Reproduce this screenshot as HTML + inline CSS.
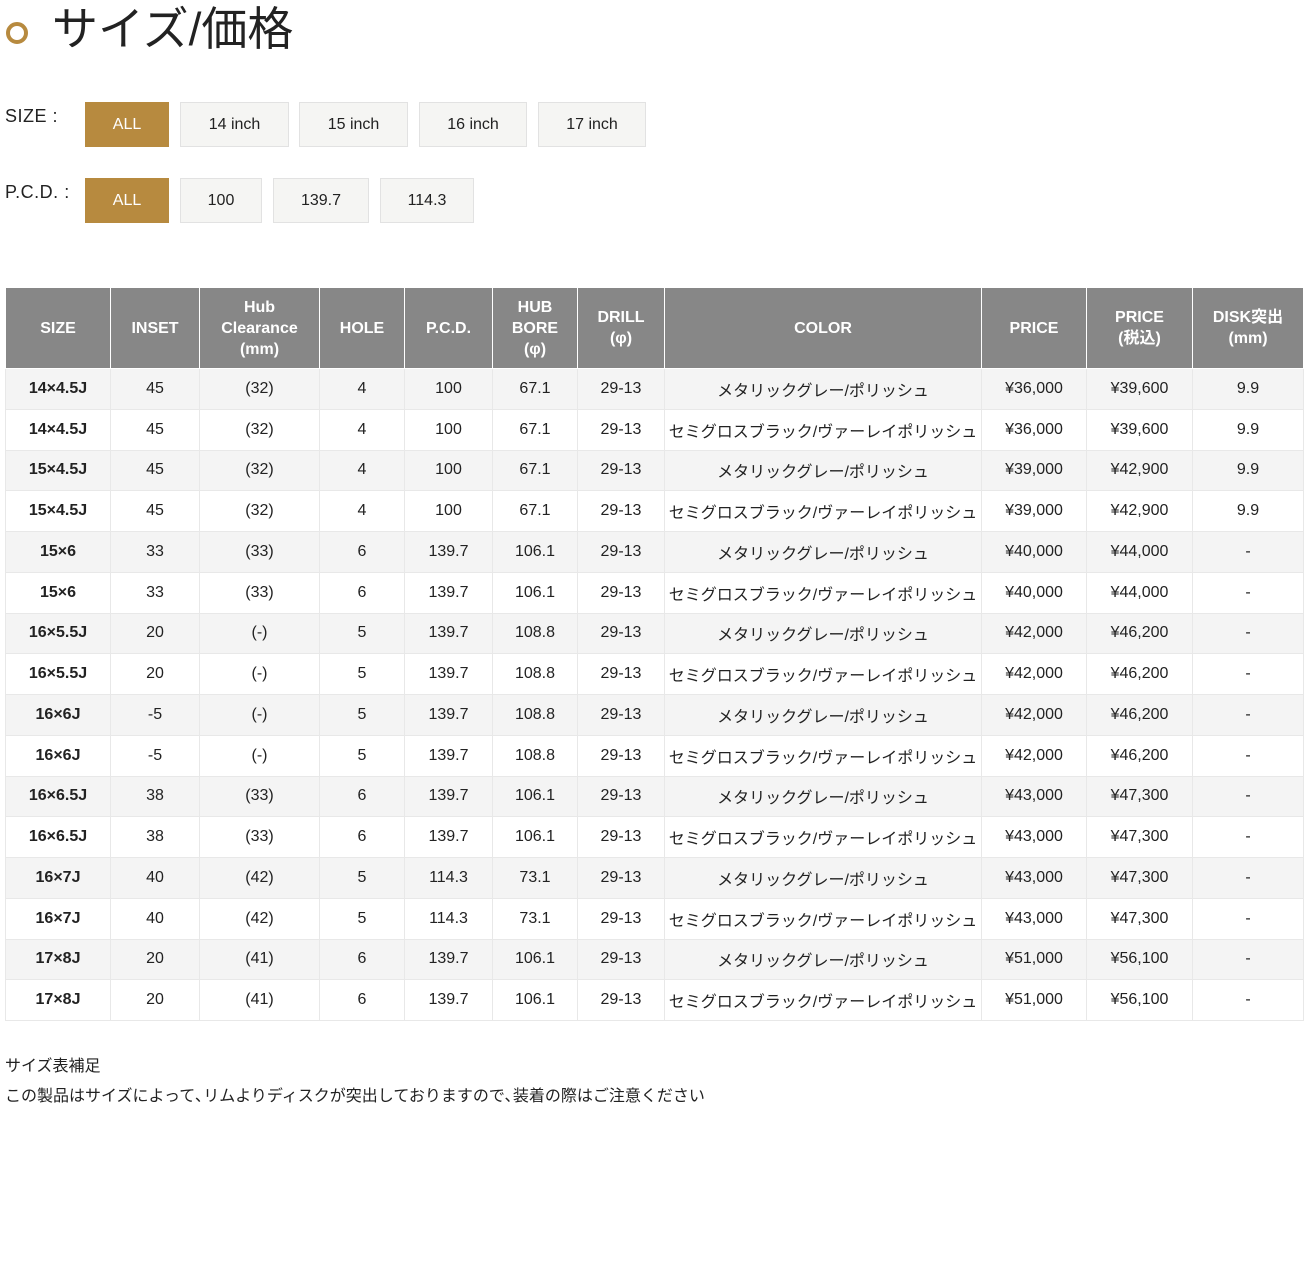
<!DOCTYPE html>
<html><head><meta charset="utf-8"><style>
*{margin:0;padding:0;box-sizing:border-box}
body{width:1311px;height:1283px;background:#fff;font-family:"Liberation Sans","Noto Sans CJK JP",sans-serif;color:#222;position:relative}
.circ{position:absolute;left:6px;top:22px;width:22px;height:22px;border:4px solid #b78a3f;border-radius:50%}
h1{position:absolute;left:52px;top:0;font-size:46px;font-weight:400;line-height:58px;color:#222}
.lbl{position:absolute;left:5px;font-size:18px;letter-spacing:0.5px}
.btn{position:absolute;height:45px;background:#f5f5f3;border:1px solid #e2e2e2;font-size:16px;display:flex;align-items:center;justify-content:center;color:#222}
.btn.on{background:#b78a3f;border-color:#b78a3f;color:#fff}
table{position:absolute;left:5px;top:287px;width:1298px;border-collapse:collapse;table-layout:fixed}
th{background:#878787;color:#fff;font-weight:bold;font-size:16px;height:81px;border:1px solid #fff;line-height:21px;text-align:center}
td{height:40.75px;text-align:center;font-size:16px;border:1px solid #e8e8e8;color:#222}
td:first-child{font-weight:bold}
tr:nth-child(even) td{background:#f4f4f4}
.note{position:absolute;left:5px;font-size:16px}
</style></head><body>
<div class="circ"></div>
<h1>サイズ/価格</h1>
<div class="lbl" style="top:106px">SIZE :</div>
<div class="btn on" style="left:85px;top:102px;width:84px">ALL</div>
<div class="btn" style="left:180px;top:102px;width:109px">14 inch</div>
<div class="btn" style="left:299px;top:102px;width:109px">15 inch</div>
<div class="btn" style="left:419px;top:102px;width:108px">16 inch</div>
<div class="btn" style="left:538px;top:102px;width:108px">17 inch</div>
<div class="lbl" style="top:182px">P.C.D. :</div>
<div class="btn on" style="left:85px;top:178px;width:84px">ALL</div>
<div class="btn" style="left:180px;top:178px;width:82px">100</div>
<div class="btn" style="left:273px;top:178px;width:96px">139.7</div>
<div class="btn" style="left:380px;top:178px;width:94px">114.3</div>
<table>
<colgroup><col style="width:105px"><col style="width:89px"><col style="width:120px"><col style="width:85px"><col style="width:88px"><col style="width:85px"><col style="width:87px"><col style="width:317px"><col style="width:105px"><col style="width:106px"><col style="width:111px"></colgroup>
<tr><th>SIZE</th><th>INSET</th><th>Hub<br>Clearance<br>(mm)</th><th>HOLE</th><th>P.C.D.</th><th>HUB<br>BORE<br>(φ)</th><th>DRILL<br>(φ)</th><th>COLOR</th><th>PRICE</th><th>PRICE<br>(税込)</th><th>DISK突出<br>(mm)</th></tr>
<tr><td>14×4.5J</td><td>45</td><td>(32)</td><td>4</td><td>100</td><td>67.1</td><td>29-13</td><td>メタリックグレー/ポリッシュ</td><td>¥36,000</td><td>¥39,600</td><td>9.9</td></tr>
<tr><td>14×4.5J</td><td>45</td><td>(32)</td><td>4</td><td>100</td><td>67.1</td><td>29-13</td><td>セミグロスブラック/ヴァーレイポリッシュ</td><td>¥36,000</td><td>¥39,600</td><td>9.9</td></tr>
<tr><td>15×4.5J</td><td>45</td><td>(32)</td><td>4</td><td>100</td><td>67.1</td><td>29-13</td><td>メタリックグレー/ポリッシュ</td><td>¥39,000</td><td>¥42,900</td><td>9.9</td></tr>
<tr><td>15×4.5J</td><td>45</td><td>(32)</td><td>4</td><td>100</td><td>67.1</td><td>29-13</td><td>セミグロスブラック/ヴァーレイポリッシュ</td><td>¥39,000</td><td>¥42,900</td><td>9.9</td></tr>
<tr><td>15×6</td><td>33</td><td>(33)</td><td>6</td><td>139.7</td><td>106.1</td><td>29-13</td><td>メタリックグレー/ポリッシュ</td><td>¥40,000</td><td>¥44,000</td><td>-</td></tr>
<tr><td>15×6</td><td>33</td><td>(33)</td><td>6</td><td>139.7</td><td>106.1</td><td>29-13</td><td>セミグロスブラック/ヴァーレイポリッシュ</td><td>¥40,000</td><td>¥44,000</td><td>-</td></tr>
<tr><td>16×5.5J</td><td>20</td><td>(-)</td><td>5</td><td>139.7</td><td>108.8</td><td>29-13</td><td>メタリックグレー/ポリッシュ</td><td>¥42,000</td><td>¥46,200</td><td>-</td></tr>
<tr><td>16×5.5J</td><td>20</td><td>(-)</td><td>5</td><td>139.7</td><td>108.8</td><td>29-13</td><td>セミグロスブラック/ヴァーレイポリッシュ</td><td>¥42,000</td><td>¥46,200</td><td>-</td></tr>
<tr><td>16×6J</td><td>-5</td><td>(-)</td><td>5</td><td>139.7</td><td>108.8</td><td>29-13</td><td>メタリックグレー/ポリッシュ</td><td>¥42,000</td><td>¥46,200</td><td>-</td></tr>
<tr><td>16×6J</td><td>-5</td><td>(-)</td><td>5</td><td>139.7</td><td>108.8</td><td>29-13</td><td>セミグロスブラック/ヴァーレイポリッシュ</td><td>¥42,000</td><td>¥46,200</td><td>-</td></tr>
<tr><td>16×6.5J</td><td>38</td><td>(33)</td><td>6</td><td>139.7</td><td>106.1</td><td>29-13</td><td>メタリックグレー/ポリッシュ</td><td>¥43,000</td><td>¥47,300</td><td>-</td></tr>
<tr><td>16×6.5J</td><td>38</td><td>(33)</td><td>6</td><td>139.7</td><td>106.1</td><td>29-13</td><td>セミグロスブラック/ヴァーレイポリッシュ</td><td>¥43,000</td><td>¥47,300</td><td>-</td></tr>
<tr><td>16×7J</td><td>40</td><td>(42)</td><td>5</td><td>114.3</td><td>73.1</td><td>29-13</td><td>メタリックグレー/ポリッシュ</td><td>¥43,000</td><td>¥47,300</td><td>-</td></tr>
<tr><td>16×7J</td><td>40</td><td>(42)</td><td>5</td><td>114.3</td><td>73.1</td><td>29-13</td><td>セミグロスブラック/ヴァーレイポリッシュ</td><td>¥43,000</td><td>¥47,300</td><td>-</td></tr>
<tr><td>17×8J</td><td>20</td><td>(41)</td><td>6</td><td>139.7</td><td>106.1</td><td>29-13</td><td>メタリックグレー/ポリッシュ</td><td>¥51,000</td><td>¥56,100</td><td>-</td></tr>
<tr><td>17×8J</td><td>20</td><td>(41)</td><td>6</td><td>139.7</td><td>106.1</td><td>29-13</td><td>セミグロスブラック/ヴァーレイポリッシュ</td><td>¥51,000</td><td>¥56,100</td><td>-</td></tr>
</table>
<div class="note" style="top:1052px">サイズ表補足</div>
<div class="note" style="top:1082px">この製品はサイズによって､リムよりディスクが突出しておりますので､装着の際はご注意ください</div>
</body></html>
